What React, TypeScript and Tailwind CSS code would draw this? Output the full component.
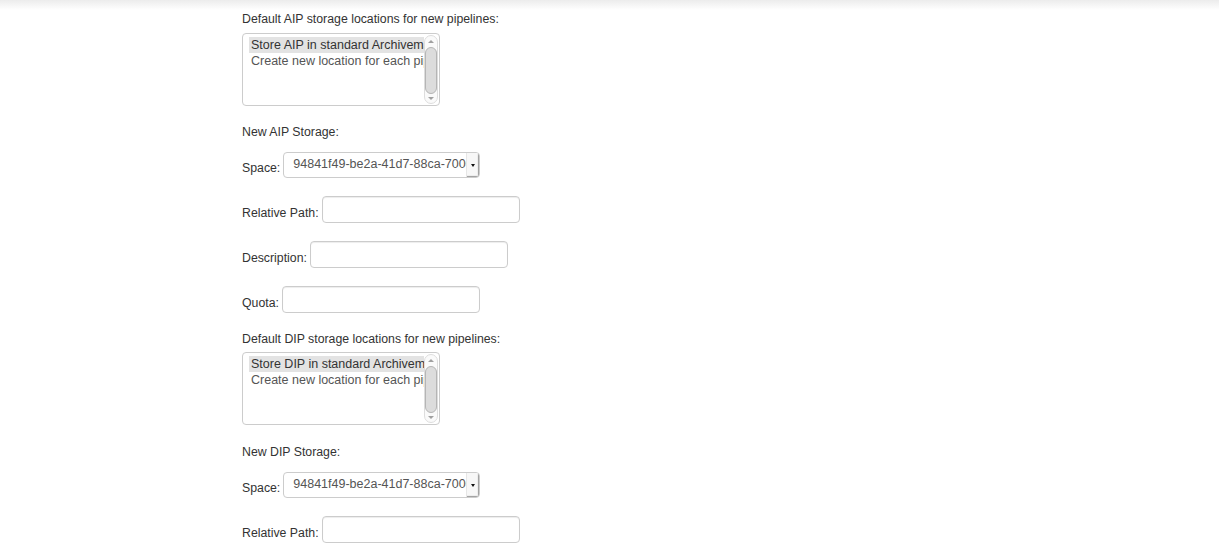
import React from "react";

const font = { fontFamily: '"Liberation Sans", Arial, Helvetica, sans-serif' };

/**
 * Fake listbox (select multiple) with a greyed selected first option
 * and a native-looking vertical scrollbar.
 */
const ListBox: React.FC<{ options: string[] }> = ({ options }) => (
  <div className="flex h-[73px] w-[198px] overflow-hidden rounded-[4px] border border-[#cccccc] bg-white">
    <div className="flex-1 overflow-hidden pl-[6px] pt-[3px]">
      {options.map((o, i) => (
        <div
          key={o}
          className={`h-[16px] whitespace-nowrap pl-[2px] text-[12.5px] leading-[16px] ${
            i === 0 ? "bg-[#e3e3e3] text-[#333333]" : "text-[#555555]"
          }`}
        >
          {o}
        </div>
      ))}
    </div>
    <div className="my-[1px] mr-[1px] flex w-[14px] flex-col items-center rounded-[7px] border border-[#dddddd] bg-[#fafafa]">
      <div className="flex h-[11px] items-center justify-center">
        <div className="h-0 w-0 border-x-[3px] border-b-[3px] border-x-transparent border-b-[#a0a0a0]" />
      </div>
      <div className="w-[12px] flex-1 rounded-[6px] border border-[#b5b5b5] bg-[#dcdcdc]" />
      <div className="flex h-[9px] items-center justify-center">
        <div className="h-0 w-0 border-x-[3px] border-t-[3px] border-x-transparent border-t-[#a0a0a0]" />
      </div>
    </div>
  </div>
);

const SelectBox: React.FC<{ value: string }> = ({ value }) => (
  <div className="flex h-[26px] w-[197px] overflow-hidden rounded-[4px] border border-[#cccccc] bg-white">
    <div className="flex-1 overflow-hidden whitespace-nowrap pl-[9px] pr-[4px] text-[12.5px] leading-[22px] text-[#555555]">
      {value}
    </div>
    <div className="flex w-[13px] items-center justify-center border-l border-[#e6e6e6] bg-[#f7f7f7] shadow-[-1px_-1px_1px_#999_inset]">
      <div className="h-0 w-0 border-x-[2.5px] border-t-[3px] border-x-transparent border-t-[#111111]" />
    </div>
  </div>
);

const Field: React.FC<{ label: string; children: React.ReactNode; className?: string }> = ({
  label,
  children,
  className = "",
}) => (
  <div className={`flex items-center gap-[3px] ${className}`}>
    <span className="mt-[6px] text-[12.3px] leading-[18px] text-[#333333]">{label}</span>
    {children}
  </div>
);

const TextInput: React.FC = () => (
  <div className="h-[27px] w-[198px] rounded-[4px] border border-[#cccccc] bg-white shadow-[inset_0_1px_1px_rgba(0,0,0,0.075)]" />
);

const Heading: React.FC<{ children: React.ReactNode; className?: string }> = ({ children, className = "" }) => (
  <div className={`text-[12.3px] leading-[18px] text-[#333333] ${className}`}>{children}</div>
);

export default function App() {
  return (
    <div className="min-h-[554px] w-full bg-white" style={font}>
      <div className="h-[10px] w-full bg-gradient-to-b from-[#ececec] to-white" />
      <div className="pl-[242px]">
        <Heading>Default AIP storage locations for new pipelines:</Heading>
        <div className="mt-[5px]">
          <ListBox options={["Store AIP in standard Archivematica Directory", "Create new location for each pipeline"]} />
        </div>
        <Heading className="mt-[17px]">New AIP Storage:</Heading>
        <Field label="Space:" className="mt-[11px]">
          <SelectBox value="94841f49-be2a-41d7-88ca-7000a1d5e7b0" />
        </Field>
        <Field label="Relative Path:" className="mt-[18px]">
          <TextInput />
        </Field>
        <Field label="Description:" className="mt-[18px]">
          <TextInput />
        </Field>
        <Field label="Quota:" className="mt-[18px]">
          <TextInput />
        </Field>
        <Heading className="mt-[17px]">Default DIP storage locations for new pipelines:</Heading>
        <div className="mt-[4px]">
          <ListBox options={["Store DIP in standard Archivematica Directory", "Create new location for each pipeline"]} />
        </div>
        <Heading className="mt-[18px]">New DIP Storage:</Heading>
        <Field label="Space:" className="mt-[11px]">
          <SelectBox value="94841f49-be2a-41d7-88ca-7000a1d5e7b0" />
        </Field>
        <Field label="Relative Path:" className="mt-[18px]">
          <TextInput />
        </Field>
      </div>
    </div>
  );
}
